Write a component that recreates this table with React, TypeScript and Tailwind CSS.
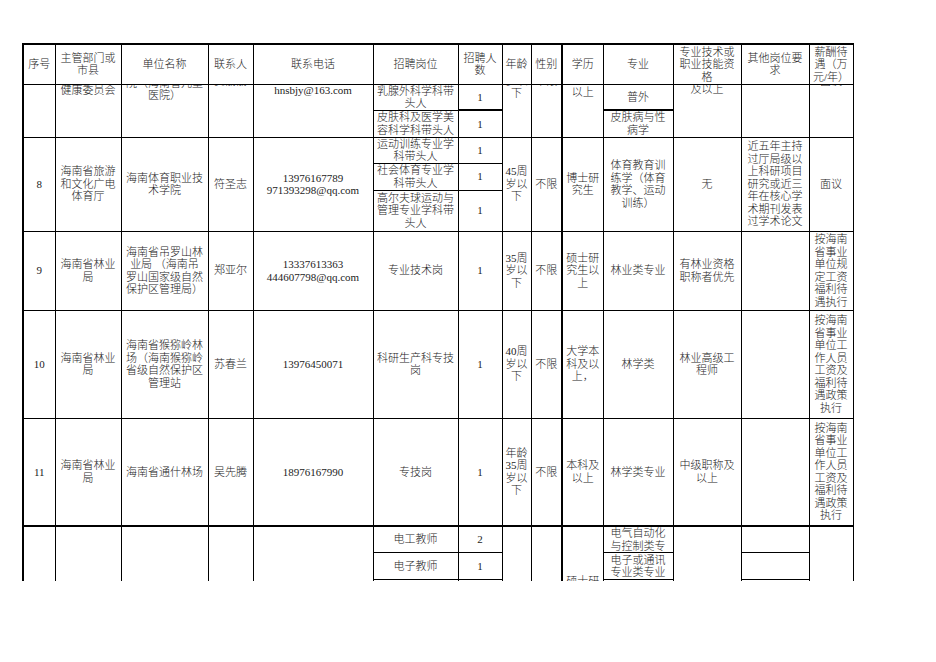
import React from "react";

type TdProps = { lines?: string[]; rs?: number; cls?: string };

function Lines({ lines }: { lines: string[] }) {
  return (
    <>
      {lines.map((l, i) => (
        <div key={i} className="whitespace-pre">
          {l}
        </div>
      ))}
    </>
  );
}

function Td({ lines = [], rs, cls = "" }: TdProps) {
  return (
    <td rowSpan={rs} className={`border border-black p-0 text-center align-middle ${cls}`}>
      <Lines lines={lines} />
    </td>
  );
}

function Clip({ lines, pb, cls = "" }: { lines: string[]; pb: string; cls?: string }) {
  return (
    <td rowSpan={2} className={`border border-black p-0 text-center align-top ${cls}`}>
      <div className="flex h-[52px] flex-col justify-end overflow-hidden">
        <div className={pb}>
          <Lines lines={lines} />
        </div>
      </div>
    </td>
  );
}

const salaryA = ["按海南", "省事业", "单位规", "定工资", "福利待", "遇执行"];
const salaryB = ["按海南", "省事业", "单位工", "作人员", "工资及", "福利待", "遇政策", "执行"];

export default function App() {
  return (
    <div className="min-h-[662px] w-[936px] bg-white pl-[22px] pt-[43px] font-['Liberation_Serif','Noto_Sans_CJK_SC',serif] text-[11px] font-light leading-[12.5px] text-[#1c1c1c]">
      <div className="h-[538px] w-[840px] overflow-hidden">
        <table className="w-[831px] table-fixed border-collapse">
          <colgroup>
            <col className="w-[32px]" />
            <col className="w-[66px]" />
            <col className="w-[87px]" />
            <col className="w-[45px]" />
            <col className="w-[120px]" />
            <col className="w-[85px]" />
            <col className="w-[44px]" />
            <col className="w-[29px]" />
            <col className="w-[31px]" />
            <col className="w-[41px]" />
            <col className="w-[70px]" />
            <col className="w-[68px]" />
            <col className="w-[68px]" />
            <col className="w-[44px]" />
          </colgroup>
          <tbody>
            {/* header */}
            <tr className="h-[40px]">
              <Td lines={["序号"]} cls="border-t-2 border-l-2" />
              <Td lines={["主管部门或", "市县"]} cls="border-t-2" />
              <Td lines={["单位名称"]} cls="border-t-2" />
              <Td lines={["联系人"]} cls="border-t-2" />
              <Td lines={["联系电话"]} cls="border-t-2" />
              <Td lines={["招聘岗位"]} cls="border-t-2" />
              <Td lines={["招聘人", "数"]} cls="border-t-2" />
              <Td lines={["年龄"]} cls="border-t-2" />
              <Td lines={["性别"]} cls="border-t-2" />
              <Td lines={["学历"]} cls="border-t-2 border-l-2" />
              <Td lines={["专业"]} cls="border-t-2" />
              <Td lines={["专业技术或", "职业技能资", "格"]} cls="border-t-2" />
              <Td lines={["其他岗位要", "求"]} cls="border-t-2" />
              <Td lines={["薪酬待", "遇（万", "元/年）"]} cls="border-t-2" />
            </tr>

            {/* row 7 (continued from previous page) */}
            <tr className="h-[26px]">
              <Clip lines={["7"]} pb="pb-[49px]" cls="border-l-2" />
              <Clip lines={["海南省卫生", "健康委员会"]} pb="pb-[40px]" />
              <Clip lines={["海南省妇幼保健", "院（海南省儿童", "医院）"]} pb="pb-[35px]" />
              <Clip lines={["黄丽丽"]} pb="pb-[49px]" />
              <Clip lines={["0898-66800000", "hnsbjy@163.com"]} pb="pb-[40px]" />
              <Td lines={["乳腺外科学科带", "头人"]} />
              <Td lines={["1"]} />
              <Clip lines={["35周", "岁以", "下"]} pb="pb-[37px]" />
              <Clip lines={["不限"]} pb="pb-[49px]" />
              <Clip lines={["硕士及", "以上"]} pb="pb-[38px]" cls="border-l-2" />
              <Td lines={["普外"]} />
              <Clip lines={["副高级职称", "及以上"]} pb="pb-[41px]" />
              <Td rs={2} />
              <Clip lines={["面议"]} pb="pb-[49px]" />
            </tr>
            <tr className="h-[27px]">
              <Td lines={["皮肤科及医学美", "容科学科带头人"]} />
              <Td lines={["1"]} cls="border-t-2" />
              <Td lines={["皮肤病与性", "病学"]} cls="border-t-2" />
            </tr>

            {/* row 8 */}
            <tr className="h-[26px]">
              <Td rs={3} lines={["8"]} cls="border-l-2" />
              <Td rs={3} lines={["海南省旅游", "和文化广电", "体育厅"]} />
              <Td rs={3} lines={["海南体育职业技", "术学院"]} />
              <Td rs={3} lines={["符圣志"]} />
              <Td rs={3} lines={["13976167789", "971393298@qq.com"]} />
              <Td lines={["运动训练专业学", "科带头人"]} />
              <Td lines={["1"]} />
              <Td rs={3} lines={["45周", "岁以", "下"]} />
              <Td rs={3} lines={["不限"]} />
              <Td rs={3} lines={["博士研", "究生"]} cls="border-l-2" />
              <Td rs={3} lines={["体育教育训", "练学（体育", "教学、运动", "训练）"]} />
              <Td rs={3} lines={["无"]} />
              <Td
                rs={3}
                lines={["近五年主持", "过厅局级以", "上科研项目", "研究或近三", "年在核心学", "术期刊发表", "过学术论文"]}
              />
              <Td rs={3} lines={["面议"]} />
            </tr>
            <tr className="h-[27px]">
              <Td lines={["社会体育专业学", "科带头人"]} />
              <Td lines={["1"]} />
            </tr>
            <tr className="h-[41px]">
              <Td lines={["高尔夫球运动与", "管理专业学科带", "头人"]} />
              <Td lines={["1"]} />
            </tr>

            {/* row 9 */}
            <tr className="h-[79px]">
              <Td lines={["9"]} cls="border-l-2" />
              <Td lines={["海南省林业", "局"]} />
              <Td lines={["海南省吊罗山林", "业局 （海南吊", "罗山国家级自然", "保护区管理局）"]} />
              <Td lines={["郑亚尔"]} />
              <Td lines={["13337613363", "444607798@qq.com"]} />
              <Td lines={["专业技术岗"]} />
              <Td lines={["1"]} />
              <Td lines={["35周", "岁以", "下"]} />
              <Td lines={["不限"]} />
              <Td lines={["硕士研", "究生以", "上"]} cls="border-l-2" />
              <Td lines={["林业类专业"]} />
              <Td lines={["有林业资格", "职称者优先"]} />
              <Td />
              <Td lines={salaryA} />
            </tr>

            {/* row 10 */}
            <tr className="h-[108px]">
              <Td lines={["10"]} cls="border-l-2" />
              <Td lines={["海南省林业", "局"]} />
              <Td lines={["海南省猴猕岭林", "场（海南猴猕岭", "省级自然保护区", "管理站"]} />
              <Td lines={["苏春兰"]} />
              <Td lines={["13976450071"]} />
              <Td lines={["科研生产科专技", "岗"]} />
              <Td lines={["1"]} />
              <Td lines={["40周", "岁以", "下"]} />
              <Td lines={["不限"]} />
              <Td lines={["大学本", "科及以", "上，"]} cls="border-l-2" />
              <Td lines={["林学类"]} />
              <Td lines={["林业高级工", "程师"]} />
              <Td />
              <Td lines={salaryB} />
            </tr>

            {/* row 11 */}
            <tr className="h-[108px]">
              <Td lines={["11"]} cls="border-l-2" />
              <Td lines={["海南省林业", "局"]} />
              <Td lines={["海南省通什林场"]} />
              <Td lines={["吴先腾"]} />
              <Td lines={["18976167990"]} />
              <Td lines={["专技岗"]} />
              <Td lines={["1"]} />
              <Td lines={["年龄", "35周", "岁以", "下"]} />
              <Td lines={["不限"]} />
              <Td lines={["本科及", "以上"]} cls="border-l-2" />
              <Td lines={["林学类专业"]} />
              <Td lines={["中级职称及", "以上"]} />
              <Td />
              <Td lines={salaryB} />
            </tr>

            {/* row 12 (cut off at the bottom) */}
            <tr className="h-[26px]">
              <Td rs={3} cls="border-t-2 border-l-2" />
              <Td rs={3} cls="border-t-2" />
              <Td rs={3} cls="border-t-2" />
              <Td rs={3} cls="border-t-2" />
              <Td rs={3} cls="border-t-2" />
              <Td lines={["电工教师"]} cls="border-t-2" />
              <Td lines={["2"]} cls="border-t-2" />
              <Td rs={3} cls="border-t-2" />
              <Td rs={3} cls="border-t-2" />
              <td rowSpan={3} className="border border-l-2 border-t-2 border-black p-0 pt-[48px] text-center align-top">
                <div>硕士研</div>
                <div>究生</div>
              </td>
              <Td lines={["电气自动化", "与控制类专"]} cls="border-t-2" />
              <Td rs={3} cls="border-t-2" />
              <Td cls="border-t-2" />
              <Td rs={3} cls="border-t-2" />
            </tr>
            <tr className="h-[27px]">
              <Td lines={["电子教师"]} />
              <Td lines={["1"]} />
              <Td lines={["电子或通讯", "专业类专业"]} />
              <Td />
            </tr>
            <tr className="h-[60px]">
              <Td />
              <Td />
              <Td />
              <Td />
            </tr>
          </tbody>
        </table>
      </div>
    </div>
  );
}
